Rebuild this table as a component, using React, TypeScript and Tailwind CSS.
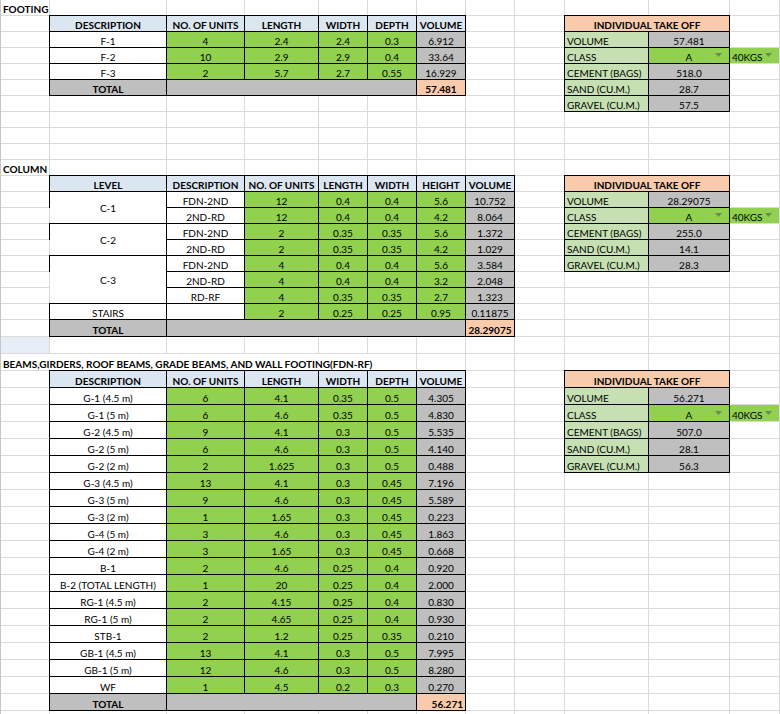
import type { ReactNode } from "react";

type Tone = "none" | "head" | "white" | "green" | "gray" | "peach" | "mint" | "blue";

type Cell = {
  t?: string;
  span?: number;
  rows?: number;
  tone?: Tone;
  box?: boolean;
  bold?: boolean;
  align?: "left" | "center" | "right";
  drop?: boolean;
};

const colSpan: Record<number, string> = {
  1: "",
  2: "col-span-2",
  3: "col-span-3",
  4: "col-span-4",
  5: "col-span-5",
  6: "col-span-6",
};

const rowSpan: Record<number, string> = {
  1: "",
  2: "row-span-2",
  3: "row-span-3",
};

const toneBg: Record<Tone, string> = {
  none: "",
  head: "bg-[#dce6f1]",
  white: "bg-white",
  green: "bg-[#92d050]",
  gray: "bg-[#bfbfbf]",
  peach: "bg-[#f8cbad]",
  mint: "bg-[#c6e0b4]",
  blue: "bg-[#e8eef7]",
};

const alignCls = {
  left: "justify-start pl-[2px]",
  center: "justify-center",
  right: "justify-end pr-[2px]",
};

// helpers
const b = (n = 1): Cell[] => Array.from({ length: n }, () => ({}));
const label = (t: string, span = 1): Cell => ({ t, span, bold: true, align: "left" });
const head = (t: string): Cell => ({ t, tone: "head", box: true, bold: true });
const white = (t: string, rows = 1): Cell => ({ t, rows, tone: "white", box: true });
const green = (t: string): Cell => ({ t, tone: "green", box: true });
const gray = (t: string): Cell => ({ t, tone: "gray", box: true });

const takeOff = (vals: string[]): Cell[][] => [
  [{ t: "INDIVIDUAL TAKE OFF", span: 2, tone: "peach", box: true, bold: true }, {}],
  [{ t: "VOLUME", tone: "mint", box: true, align: "left" }, gray(vals[0]), {}],
  [
    { t: "CLASS", tone: "mint", box: true, align: "left" },
    { t: "A", tone: "green", box: true, drop: true },
    { t: "40KGS", tone: "green", align: "left", drop: true },
  ],
  [{ t: "CEMENT (BAGS)", tone: "mint", box: true, align: "left" }, gray(vals[1]), {}],
  [{ t: "SAND (CU.M.)", tone: "mint", box: true, align: "left" }, gray(vals[2]), {}],
  [{ t: "GRAVEL (CU.M.)", tone: "mint", box: true, align: "left" }, gray(vals[3]), {}],
];

// FOOTING
const footingRows = [
  ["F-1", "4", "2.4", "2.4", "0.3", "6.912"],
  ["F-2", "10", "2.9", "2.9", "0.4", "33.64"],
  ["F-3", "2", "5.7", "2.7", "0.55", "16.929"],
];

function footingCells(): Cell[] {
  const to = takeOff(["57.481", "518.0", "28.7", "57.5"]);
  const out: Cell[] = [label("FOOTING"), ...b(11)];
  out.push({}, ...["DESCRIPTION", "NO. OF UNITS", "LENGTH", "WIDTH", "DEPTH", "VOLUME"].map(head), ...b(2), ...to[0]);
  footingRows.forEach((r, i) => {
    out.push({}, white(r[0]), ...r.slice(1, 5).map(green), gray(r[5]), ...b(2), ...to[i + 1]);
  });
  out.push(
    {},
    { t: "TOTAL", tone: "gray", box: true, bold: true },
    { span: 4, tone: "gray", box: true },
    { t: "57.481", tone: "peach", box: true, bold: true },
    ...b(2),
    ...to[4]
  );
  out.push(...b(9), ...to[5]);
  out.push(...b(36));
  return out;
}

// COLUMN
const columnRows: { lvl?: [string, number]; r: string[] }[] = [
  { lvl: ["C-1", 2], r: ["FDN-2ND", "12", "0.4", "0.4", "5.6", "10.752"] },
  { r: ["2ND-RD", "12", "0.4", "0.4", "4.2", "8.064"] },
  { lvl: ["C-2", 2], r: ["FDN-2ND", "2", "0.35", "0.35", "5.6", "1.372"] },
  { r: ["2ND-RD", "2", "0.35", "0.35", "4.2", "1.029"] },
  { lvl: ["C-3", 3], r: ["FDN-2ND", "4", "0.4", "0.4", "5.6", "3.584"] },
  { r: ["2ND-RD", "4", "0.4", "0.4", "3.2", "2.048"] },
  { r: ["RD-RF", "4", "0.35", "0.35", "2.7", "1.323"] },
  { lvl: ["STAIRS", 1], r: ["", "2", "0.25", "0.25", "0.95", "0.11875"] },
];

function columnCells(): Cell[] {
  const to = takeOff(["28.29075", "255.0", "14.1", "28.3"]);
  const out: Cell[] = [label("COLUMN"), ...b(11)];
  out.push(
    {},
    ...["LEVEL", "DESCRIPTION", "NO. OF UNITS", "LENGTH", "WIDTH", "HEIGHT", "VOLUME"].map(head),
    {},
    ...to[0]
  );
  columnRows.forEach((row, i) => {
    out.push({});
    if (row.lvl) out.push(white(row.lvl[0], row.lvl[1]));
    out.push(white(row.r[0]), ...row.r.slice(1, 5).map(green), gray(row.r[5]), {});
    out.push(...(to[i + 1] ?? b(3)));
  });
  out.push(
    {},
    { t: "TOTAL", tone: "gray", box: true, bold: true },
    { span: 5, tone: "gray", box: true },
    { t: "28.29075", tone: "peach", box: true, bold: true },
    ...b(4)
  );
  out.push({ tone: "blue" }, ...b(11));
  return out;
}

// BEAMS
const beamRows = [
  ["G-1 (4.5 m)", "6", "4.1", "0.35", "0.5", "4.305"],
  ["G-1 (5 m)", "6", "4.6", "0.35", "0.5", "4.830"],
  ["G-2 (4.5 m)", "9", "4.1", "0.3", "0.5", "5.535"],
  ["G-2 (5 m)", "6", "4.6", "0.3", "0.5", "4.140"],
  ["G-2 (2 m)", "2", "1.625", "0.3", "0.5", "0.488"],
  ["G-3 (4.5 m)", "13", "4.1", "0.3", "0.45", "7.196"],
  ["G-3 (5 m)", "9", "4.6", "0.3", "0.45", "5.589"],
  ["G-3 (2 m)", "1", "1.65", "0.3", "0.45", "0.223"],
  ["G-4 (5 m)", "3", "4.6", "0.3", "0.45", "1.863"],
  ["G-4 (2 m)", "3", "1.65", "0.3", "0.45", "0.668"],
  ["B-1", "2", "4.6", "0.25", "0.4", "0.920"],
  ["B-2 (TOTAL LENGTH)", "1", "20", "0.25", "0.4", "2.000"],
  ["RG-1 (4.5 m)", "2", "4.15", "0.25", "0.4", "0.830"],
  ["RG-1 (5 m)", "2", "4.65", "0.25", "0.4", "0.930"],
  ["STB-1", "2", "1.2", "0.25", "0.35", "0.210"],
  ["GB-1 (4.5 m)", "13", "4.1", "0.3", "0.5", "7.995"],
  ["GB-1 (5 m)", "12", "4.6", "0.3", "0.5", "8.280"],
  ["WF", "1", "4.5", "0.2", "0.3", "0.270"],
];

function beamCells(): Cell[] {
  const to = takeOff(["56.271", "507.0", "28.1", "56.3"]);
  const out: Cell[] = [
    label("BEAMS,GIRDERS, ROOF BEAMS, GRADE BEAMS, AND WALL FOOTING(FDN-RF)", 6),
    ...b(6),
  ];
  out.push({}, ...["DESCRIPTION", "NO. OF UNITS", "LENGTH", "WIDTH", "DEPTH", "VOLUME"].map(head), ...b(2), ...to[0]);
  beamRows.forEach((r, i) => {
    out.push({}, white(r[0]), ...r.slice(1, 5).map(green), gray(r[5]), ...b(2), ...(to[i + 1] ?? b(3)));
  });
  out.push(
    {},
    { t: "TOTAL", tone: "gray", box: true, bold: true },
    { span: 4, tone: "gray", box: true },
    { t: "56.271", tone: "peach", box: true, bold: true, align: "right" },
    ...b(5)
  );
  out.push(...b(12));
  return out;
}

function Arrow() {
  return (
    <svg width="7" height="4" viewBox="0 0 7 4" className="absolute bottom-[6px] right-[7px]">
      <path d="M0 0h7L3.5 4z" fill="#5d6b55" fillOpacity="0.7" />
    </svg>
  );
}

function SheetCell({ c }: { c: Cell }) {
  const rows = c.rows ?? 1;
  const cls = [
    "relative flex leading-none whitespace-nowrap",
    colSpan[c.span ?? 1],
    rowSpan[rows],
    toneBg[c.tone ?? "none"],
    alignCls[c.align ?? "center"],
    rows > 1 ? "items-center" : "items-end pb-px",
    c.box ? "-ml-px -mt-px border border-black" : "border-r border-b border-[#dadada]",
    c.bold ? "font-bold" : "",
  ].join(" ");
  return (
    <div className={cls}>
      {c.t}
      {c.drop && <Arrow />}
    </div>
  );
}

const cols = "grid grid-cols-[49px_117px_78px_74px_49px_49px_49px_49px_50px_84px_81px_50px]";

function Section({ cells, rowsCls }: { cells: Cell[]; rowsCls: string }): ReactNode {
  return (
    <div className={`${cols} ${rowsCls}`}>
      {cells.map((c, i) => (
        <SheetCell key={i} c={c} />
      ))}
    </div>
  );
}

export default function App() {
  return (
    <div className="h-[714px] w-[780px] overflow-hidden border-l border-[#c6c6c6] bg-white text-[10px] text-black [font-family:Lato,'Liberation_Sans',sans-serif]">
      <Section cells={footingCells()} rowsCls="auto-rows-[16px]" />
      <Section cells={columnCells()} rowsCls="grid-rows-[repeat(10,16px)_17px_17px]" />
      <Section cells={beamCells()} rowsCls="auto-rows-[17px]" />
    </div>
  );
}
